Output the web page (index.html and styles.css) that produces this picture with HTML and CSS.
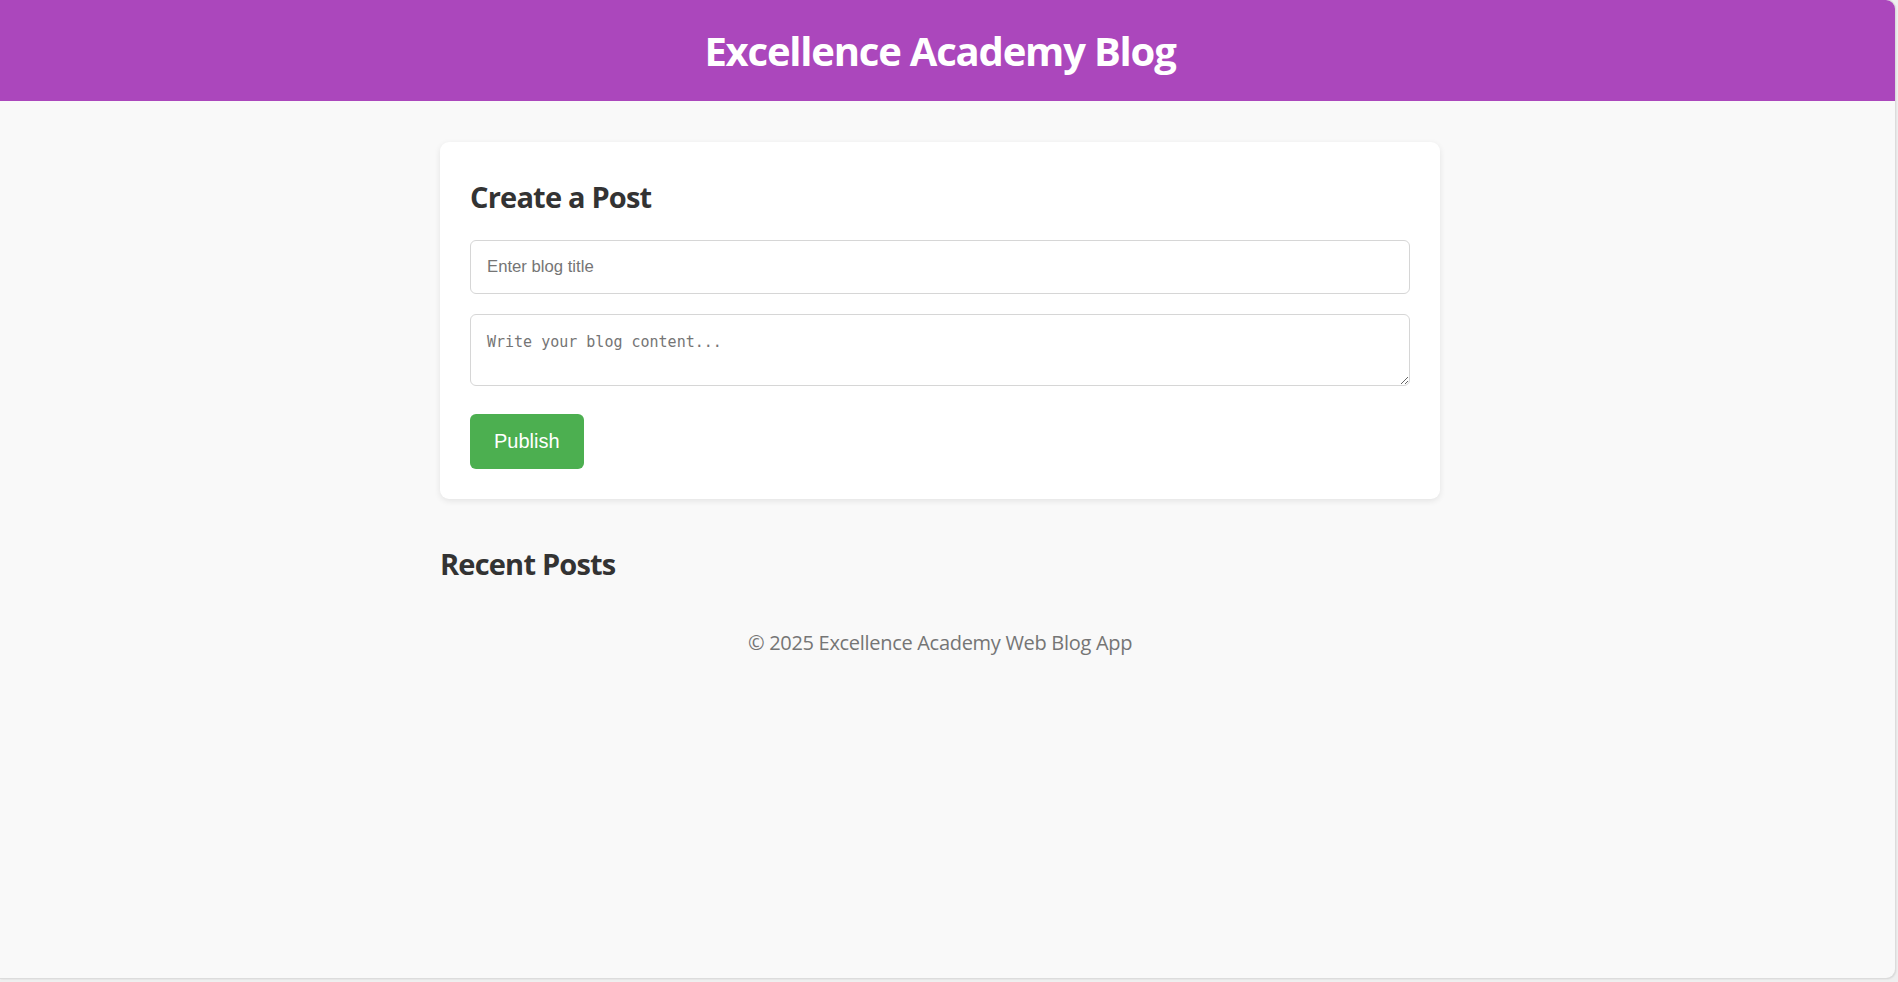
FILE: index.html
```html
<!DOCTYPE html>
<html lang="en">
<head>
<meta charset="utf-8">
<title>Excellence Academy Blog</title>
<link rel="stylesheet" href="styles.css">
</head>
<body>
<div class="window">
  <header class="site-header">
    <h1 class="site-title">Excellence Academy Blog</h1>
  </header>
  <div class="content">
    <main class="main">
      <section class="card">
        <h2 class="card-title">Create a Post</h2>
        <form class="post-form">
          <input class="field field-title" type="text" placeholder="Enter blog title">
          <textarea class="field field-body" placeholder="Write your blog content..."></textarea>
          <button class="btn-publish" type="button">Publish</button>
        </form>
      </section>
      <section class="recent">
        <h2 class="recent-title">Recent Posts</h2>
      </section>
    </main>
    <footer class="site-footer">© 2025 Excellence Academy Web Blog App</footer>
  </div>
</div>
</body>
</html>
```

FILE: styles.css
```css
* { box-sizing: border-box; }

html, body {
  margin: 0;
  padding: 0;
}

body {
  background: #efefef;
  font-family: "Open Sans", "Noto Sans", sans-serif;
  width: 1898px;
  height: 982px;
  overflow: hidden;
}

.window {
  width: 1895px;
  height: 978px;
  background: #f9f9f9;
  border-radius: 0 9px 9px 0;
  overflow: hidden;
  box-shadow: 0 0 0 1px #dcdcdc, 1px 1px 2px rgba(0, 0, 0, 0.12);
}

.site-header {
  background: #ab47bc;
  height: 101px;
  padding-right: 15px;
}

.site-title {
  margin: 0;
  color: #ffffff;
  font-size: 40px;
  font-weight: 700;
  line-height: 101px;
  text-align: center;
  letter-spacing: -1.2px;
}

.content {
  padding-right: 15px;
}

.main {
  width: 1000px;
  margin: 0 auto;
  padding-top: 41px;
}

.card {
  background: #ffffff;
  border-radius: 9px;
  padding: 30px;
  box-shadow: 0 2px 6px rgba(0, 0, 0, 0.09);
}

.card-title,
.recent-title {
  margin: 0;
  color: #333333;
  font-size: 29px;
  font-weight: 700;
  line-height: 50px;
  letter-spacing: -0.8px;
}

.post-form {
  display: flex;
  flex-direction: column;
  align-items: flex-start;
  margin-top: 18px;
}

.field {
  width: 100%;
  border: 1px solid #d6d6d6;
  border-radius: 6px;
  background: #ffffff;
  color: #333;
  outline: none;
}

.field::placeholder {
  color: #757575;
  opacity: 1;
}

.field-title {
  height: 54px;
  padding: 0 16px;
  font-family: "Liberation Sans", Arial, sans-serif;
  font-size: 16.7px;
  margin-bottom: 20px;
}

.field-body {
  height: 72px;
  padding: 18px 16px 10px 16px;
  font-family: "DejaVu Sans Mono", "Liberation Mono", monospace;
  font-size: 15px;
  line-height: 18px;
  resize: vertical;
  margin-bottom: 28px;
  display: block;
}

.btn-publish {
  height: 55px;
  border: none;
  border-radius: 6px;
  background: #4caf50;
  color: #ffffff;
  font-family: "Liberation Sans", Arial, sans-serif;
  font-size: 20px;
  padding: 0 24px;
  cursor: pointer;
}

.recent {
  margin-top: 40px;
}

.site-footer {
  margin-top: 40px;
  text-align: center;
  color: #757575;
  font-size: 20px;
  line-height: 28px;
  letter-spacing: -0.3px;
}
```
